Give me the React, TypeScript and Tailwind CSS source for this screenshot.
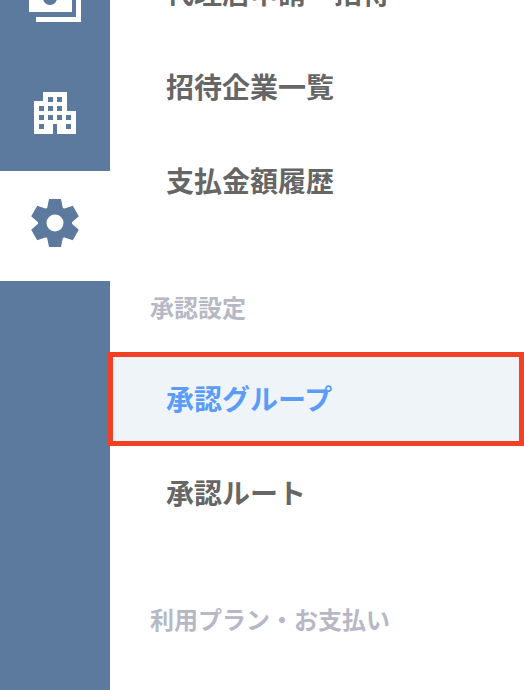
import type { ReactNode } from 'react';

const FONT = "font-['Noto_Sans_CJK_JP','Noto_Sans',sans-serif]";

function PhotoIcon() {
  return (
    <svg width="52" height="38" viewBox="0 0 52 38" fill="none">
      <path d="M0 0H43V28H0Z" fill="#fff" />
      <circle cx="21" cy="14" r="7" fill="#5b7a9e" />
      <path d="M7 35.5H49.5V6" stroke="#fff" strokeWidth="5" />
    </svg>
  );
}

function BuildingIcon() {
  const holes = [
    [14, 5], [23, 5],
    [5, 14], [14, 14], [23, 14],
    [5, 23], [14, 23], [23, 23], [32, 23],
    [5, 32], [32, 32],
  ];
  return (
    <svg width="42" height="42" viewBox="0 0 42 42">
      <path d="M9 0H33V19H42V42H23V32H19V42H0V9H9Z" fill="#fff" />
      {holes.map(([x, y]) => (
        <rect key={`${x}-${y}`} x={x} y={y} width="5" height="5" fill="#5b7a9e" />
      ))}
    </svg>
  );
}

function GearIcon() {
  return (
    <svg width="48" height="48" viewBox="-24 -24 48 48" fill="#5b7a9e">
      <path
        fillRule="evenodd"
        d="M0-17a17 17 0 1 1 0 34a17 17 0 1 1 0-34ZM0-8.5a8.5 8.5 0 1 0 0 17a8.5 8.5 0 1 0 0-17Z"
      />
      {[0, 60, 120, 180, 240, 300].map((deg) => (
        <path key={deg} d="M-6-24H6L8-14H-8Z" transform={`rotate(${deg})`} />
      ))}
    </svg>
  );
}

function SideItem({ active, children }: { active?: boolean; children: ReactNode }) {
  return (
    <div className={`flex h-[110px] items-center justify-center pb-[6px] ${active ? 'bg-white' : ''}`}>
      {children}
    </div>
  );
}

function MenuItem({ label }: { label: string }) {
  return (
    <div className="flex h-[94px] items-center pb-[2px] pl-[56px] text-[28px] font-bold leading-none text-[#666666]">
      {label}
    </div>
  );
}

function SectionLabel({ label, className }: { label: string; className: string }) {
  return (
    <div className={`pl-[40px] text-[24px] font-bold leading-none text-[#b6b8c6] ${className}`}>{label}</div>
  );
}

export default function App() {
  return (
    <div className={`flex h-[690px] w-[524px] overflow-hidden bg-white ${FONT}`}>
      {/* Sidebar */}
      <div className="-mt-[49px] w-[110px] shrink-0 bg-[#5b7a9e]">
        <SideItem>
          <PhotoIcon />
        </SideItem>
        <SideItem>
          <BuildingIcon />
        </SideItem>
        <SideItem active>
          <GearIcon />
        </SideItem>
      </div>

      {/* Menu */}
      <div className="-mt-[54px] min-w-0 flex-1">
        <MenuItem label="代理店申請・招待" />
        <MenuItem label="招待企業一覧" />
        <MenuItem label="支払金額履歴" />
        <SectionLabel label="承認設定" className="pt-[67px] pb-[33px]" />
        <div className="relative -ml-[2px] flex h-[94px] items-center border-[5px] border-[#f04124] bg-[#eff4f9] pb-[2px] pl-[53px] text-[28px] font-bold leading-none text-[#5a9cf8]">
          承認グループ
        </div>
        <MenuItem label="承認ルート" />
        <SectionLabel label="利用プラン・お支払い" className="pt-[67px]" />
      </div>
    </div>
  );
}
